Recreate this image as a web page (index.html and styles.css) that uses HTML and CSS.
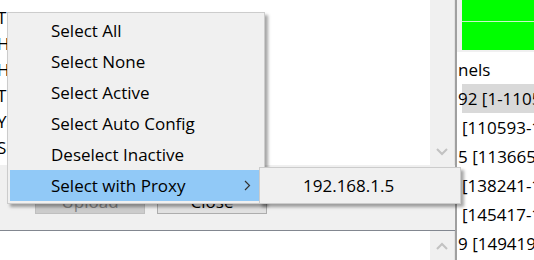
FILE: index.html
```html
<!DOCTYPE html>
<html lang="en">
<head>
  <meta charset="UTF-8">
  <title>Channel Uploader</title>
  <link rel="stylesheet" href="styles.css">
</head>
<body>

  <div class="window">
    <div class="left">
      <div class="log">
        <div class="log-lines">
          <div class="line">Tuesday T. Main</div>
          <div class="line">Hosts loaded</div>
          <div class="line">Hub found</div>
          <div class="line">Trying proxy</div>
          <div class="line">Yahoo ok</div>
          <div class="line">Sending list</div>
        </div>
        <div class="vscroll">
          <svg class="arrow-down" width="12" height="8" viewBox="0 0 12 8"><polyline points="1,1 6,6 11,1" fill="none" stroke="#c2c2c2" stroke-width="2"/></svg>
        </div>
      </div>

      <div class="buttons">
        <button class="btn" disabled>Upload</button>
        <button class="btn">Close</button>
      </div>

      <div class="log log-bottom">
        <div class="log-lines"></div>
        <div class="vscroll up">
          <svg class="arrow-up" width="12" height="8" viewBox="0 0 12 8"><polyline points="1,7 6,2 11,7" fill="none" stroke="#c2c2c2" stroke-width="2"/></svg>
        </div>
      </div>
    </div>

    <div class="right">
      <div class="status">
        <div class="bar"></div>
        <div class="bar tall"></div>
      </div>
      <div class="list">
        <div class="row cut">nels</div>
        <div class="row cut selected">92 [1-110592]</div>
        <div class="row">[110593-113664]</div>
        <div class="row cut">5 [113665-138240]</div>
        <div class="row">[138241-145416]</div>
        <div class="row">[145417-149418]</div>
        <div class="row cut">9 [149419-150000]</div>
      </div>
    </div>
  </div>

  <!-- context menu -->
  <div class="menu">
    <div class="item">Select All</div>
    <div class="item">Select None</div>
    <div class="item">Select Active</div>
    <div class="item">Select Auto Config</div>
    <div class="item">Deselect Inactive</div>
    <div class="item active">Select with Proxy
      <svg class="more" width="7" height="11" viewBox="0 0 7 11"><polyline points="1,1 5.5,5.5 1,10" fill="none" stroke="#333" stroke-width="1.2"/></svg>
    </div>
  </div>

  <div class="menu submenu">
    <div class="item">192.168.1.5</div>
  </div>

</body>
</html>
```

FILE: styles.css
```css
body {
  margin: 0;
  width: 534px;
  height: 260px;
  overflow: hidden;
  background-color: #f0f0f0;
  font-family: 'Open Sans', 'Noto Sans', sans-serif;
  font-size: 17px;
  color: #000;
  position: relative;
}

.window {
  display: flex;
  height: 260px;
}

.left {
  width: 455px;
  display: flex;
  flex-direction: column;
}

.log {
  height: 165px;
  display: flex;
  background-color: #fff;
}

.log-lines {
  flex: 1;
  overflow: hidden;
  padding-top: 5px;
}

.line {
  height: 26px;
  line-height: 26px;
  white-space: nowrap;
  text-indent: -3px;
}

.vscroll {
  width: 24px;
  background-color: #f0f0f0;
  border-right: 1px solid #e3e3e3;
  display: flex;
  flex-direction: column;
  justify-content: flex-end;
  align-items: center;
  padding-bottom: 9px;
}

.vscroll.up {
  justify-content: flex-start;
  padding-top: 11px;
  padding-bottom: 0;
}

.buttons {
  height: 65px;
  display: flex;
  gap: 12px;
  padding: 24px 0 0 35px;
  box-sizing: border-box;
}

.btn {
  width: 110px;
  height: 25px;
  font-family: inherit;
  font-size: 17px;
  background-color: #e1e1e1;
  border: 1px solid #adadad;
  padding: 0;
}

.btn:disabled {
  background-color: #cccccc;
  border-color: #bfbfbf;
  color: #838383;
}

.log-bottom {
  flex: 1;
  border-top: 1px solid #828790;
}

.right {
  flex: 1;
  border-left: 2px solid #a0a0a0;
  display: flex;
  flex-direction: column;
  overflow: hidden;
}

.status {
  padding-left: 5px;
}

.bar {
  height: 21px;
  background-color: #00ff00;
  border-bottom: 1px solid #c8f5c8;
}

.bar.tall {
  height: 28px;
  border-bottom: 2px solid #f0f0f0;
}

.list {
  flex: 1;
  background-color: #fff;
  padding-top: 3px;
  padding-left: 5px;
}

.row {
  height: 29px;
  line-height: 29px;
  white-space: nowrap;
}

.row.cut {
  text-indent: -4px;
}

.row.selected {
  background-color: #d9d9d9;
}

/* context menu */
.menu {
  position: absolute;
  left: 7px;
  top: 12px;
  width: 252px;
  padding: 2px;
  background-color: #f0f0f0;
  border: 1px solid #cccccc;
  box-shadow: 3px 3px 3px rgba(0, 0, 0, 0.35);
}

.item {
  height: 31px;
  line-height: 31px;
  padding-left: 41px;
  position: relative;
  white-space: nowrap;
}

.item.active {
  background-color: #91c9f7;
}

.more {
  position: absolute;
  right: 11px;
  top: 10px;
}

.submenu {
  left: 259px;
  top: 167px;
  width: 196px;
}
```
